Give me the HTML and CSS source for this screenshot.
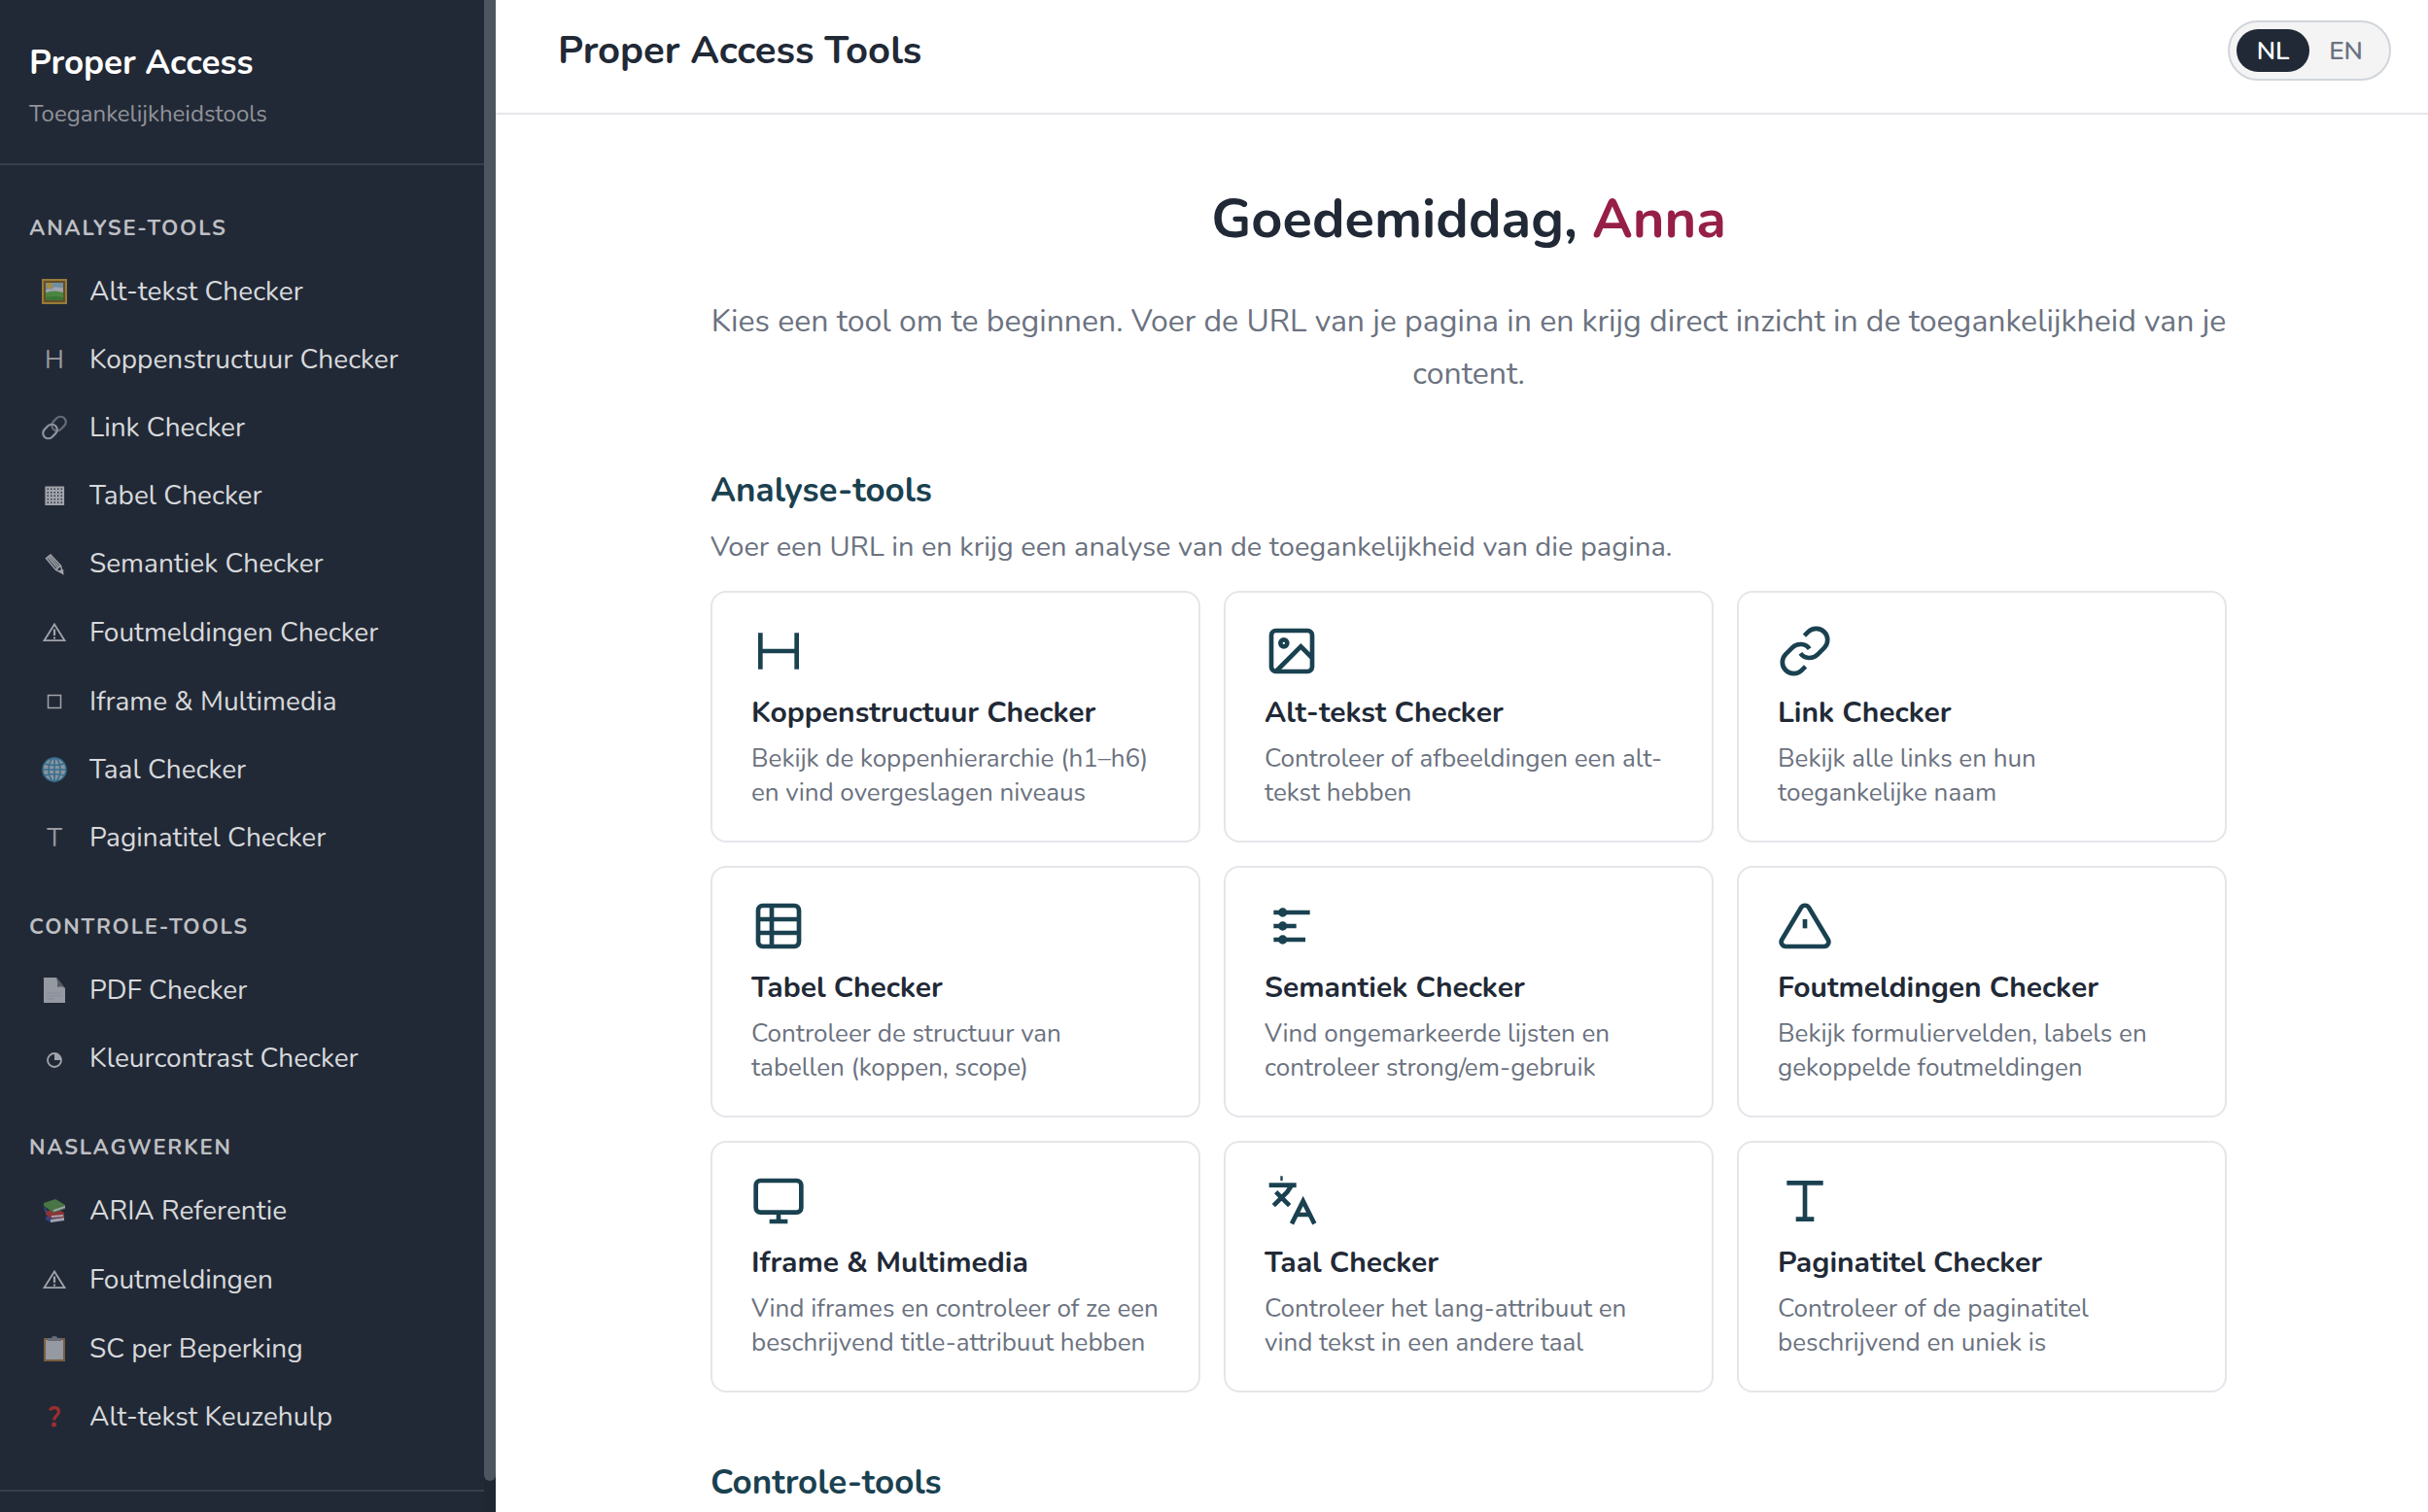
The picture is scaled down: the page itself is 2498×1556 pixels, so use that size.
FILE: index.html
```
<!DOCTYPE html>
<html lang="nl">
<head>
  <meta charset="UTF-8">
  <meta name="viewport" content="width=device-width, initial-scale=1">
  <title>Proper Access Tools</title>
  <link rel="stylesheet" href="styles.css">
</head>
<body>

<div class="layout">
  <aside class="sidebar">
    <div class="sidebar-content">
      <div class="sidebar-header">
        <a class="sidebar-logo" href="#">Proper Access</a>
        <p class="sidebar-tagline">Toegankelijkheidstools</p>
      </div>

      <nav class="sidebar-nav" aria-label="Tools">
        <section class="nav-section">
          <h2 class="nav-title">Analyse-tools</h2>
          <a class="nav-link" href="#alt-tekst">
            <span class="nav-icon"><svg viewBox="0 0 26 26" aria-hidden="true"><rect width="26" height="26" fill="#d6a83a"/><rect x="2" y="2" width="22" height="22" fill="#8a6420"/><rect x="4" y="4" width="18" height="18" fill="#9cc6dd"/><circle cx="8" cy="7" r="3" fill="#f0c244"/><path d="M4 12q3-3 6-1 3-4 7-2 4-1 5 1v4H4z" fill="#e3e6ee"/><path d="M4 14q9-3 18 0v8H4z" fill="#62b846"/><path d="M4 19q9-2 18 0v3H4z" fill="#479c38"/></svg></span>
            Alt-tekst Checker
          </a>
          <a class="nav-link" href="#koppen"><span class="nav-icon">H</span>Koppenstructuur Checker</a>
          <a class="nav-link" href="#link">
            <span class="nav-icon"><svg viewBox="0 0 26 26" fill="none" stroke-width="2.2" aria-hidden="true"><rect x="9.5" y="3.5" width="16" height="11" rx="5.5" transform="rotate(-45 17.5 9)" stroke="#8b8f9b"/><rect x="0.5" y="11.5" width="16" height="11" rx="5.5" transform="rotate(-45 8.5 17)" stroke="#c8ccd6"/></svg></span>
            Link Checker
          </a>
          <a class="nav-link" href="#tabel">
            <span class="nav-icon"><svg viewBox="0 0 26 26" fill="none" stroke="#e4e5e8" stroke-width="2.2" aria-hidden="true"><path d="M4.5 4v19M8 4v19M11.5 4v19M15 4v19M18.5 4v19M22 4v19M3.5 4.5H23M3.5 8H23M3.5 11.5H23M3.5 15H23M3.5 18.5H23M3.5 22H23"/></svg></span>
            Tabel Checker
          </a>
          <a class="nav-link" href="#semantiek">
            <span class="nav-icon"><svg viewBox="0 0 26 26" fill="none" stroke="#e4e5e8" stroke-width="1.5" aria-hidden="true"><path d="M4.5 7.5L9 4l10.5 11 2 8-7-3.5zM6 6l10.5 12M7.5 5L18 16.5M14.5 19.5l5-4.5"/><path d="M19 20.5l2.5-.5v3z" fill="#e4e5e8"/></svg></span>
            Semantiek Checker
          </a>
          <a class="nav-link nav-link-tall" href="#fout">
            <span class="nav-icon"><svg viewBox="0 0 26 26" fill="none" stroke="#e4e5e8" stroke-width="1.8" aria-hidden="true"><path d="M13 4.5l10.5 16.7h-21z"/><path d="M13 9.5V16M13 17.5v2" stroke-width="2.2"/></svg></span>
            Foutmeldingen Checker
          </a>
          <a class="nav-link" href="#iframe">
            <span class="nav-icon"><svg viewBox="0 0 26 26" fill="none" stroke="#e4e5e8" stroke-width="1.5" aria-hidden="true"><rect x="6.5" y="6.5" width="13" height="13"/></svg></span>
            Iframe &amp; Multimedia
          </a>
          <a class="nav-link" href="#taal">
            <span class="nav-icon"><svg viewBox="0 0 26 26" fill="none" stroke="#3f93bd" stroke-width="1.6" aria-hidden="true"><circle cx="13" cy="13" r="12" fill="#c3ccd6"/><ellipse cx="13" cy="13" rx="6" ry="12"/><path d="M13 1v24M1 13h24M3 7q10 3 20 0M3 19q10-3 20 0"/></svg></span>
            Taal Checker
          </a>
          <a class="nav-link" href="#paginatitel"><span class="nav-icon">T</span>Paginatitel Checker</a>
        </section>

        <section class="nav-section">
          <h2 class="nav-title">Controle-tools</h2>
          <a class="nav-link" href="#pdf">
            <span class="nav-icon"><svg viewBox="0 0 26 26" aria-hidden="true"><path d="M2 0h13l9 11v15H2z" fill="#d2d6dd"/><path d="M15 0l9 11q-4-3-8-1 1-5-1-10z" fill="#6e727b"/><path d="M5 16h15M5 19h15M5 22h8" stroke="#bcc1c9"/></svg></span>
            PDF Checker
          </a>
          <a class="nav-link" href="#contrast">
            <span class="nav-icon"><svg viewBox="0 0 26 26" aria-hidden="true"><circle cx="13" cy="15" r="7" fill="none" stroke="#e4e5e8" stroke-width="1.8"/><path d="M13 15V8a7 7 0 0 1 7 7z" fill="#e4e5e8"/></svg></span>
            Kleurcontrast Checker
          </a>
        </section>

        <section class="nav-section">
          <h2 class="nav-title">Naslagwerken</h2>
          <a class="nav-link" href="#aria">
            <span class="nav-icon"><svg viewBox="0 0 26 26" aria-hidden="true"><path d="M4 19l15-2 4 3v3L9 25l-5-3z" fill="#3c52a0"/><path d="M9 22l14-2v3L9 25z" fill="#e4e6ee"/><path d="M4 13l14-1 5 3v5l-13 1-6-4z" fill="#c63a38"/><path d="M10 18l12-1v2l-12 1z" fill="#e4e6ee"/><path d="M2 9l3 2v5l-2-2z" fill="#3c52a0"/><path d="M2 5l12-4 10 6v4l-12 4L2 8z" fill="#5c9f4c"/><path d="M12 12l12-4v2l-12 4z" fill="#e4e6ee"/></svg></span>
            ARIA Referentie
          </a>
          <a class="nav-link nav-link-tall" href="#foutmeldingen">
            <span class="nav-icon"><svg viewBox="0 0 26 26" fill="none" stroke="#e4e5e8" stroke-width="1.8" aria-hidden="true"><path d="M13 4.5l10.5 16.7h-21z"/><path d="M13 9.5V16M13 17.5v2" stroke-width="2.2"/></svg></span>
            Foutmeldingen
          </a>
          <a class="nav-link" href="#sc">
            <span class="nav-icon"><svg viewBox="0 0 26 26" aria-hidden="true"><rect x="2" y="2" width="22" height="24" fill="#a97a45"/><rect x="4" y="4" width="18" height="20" fill="#d3d6dc"/><path d="M6 2h4q0-2 3-2t3 2h4v3H6z" fill="#8d929c"/></svg></span>
            SC per Beperking
          </a>
          <a class="nav-link" href="#keuzehulp">
            <span class="nav-icon"><svg viewBox="0 0 26 26" fill="none" stroke="#e0322e" aria-hidden="true"><path d="M8.5 6.5C10 2.5 17.5 2.5 17.5 8c0 3.5-5 4-5 8.5" stroke-width="3.2"/><circle cx="12.5" cy="21" r="2.5" fill="#e0322e" stroke="none"/></svg></span>
            Alt-tekst Keuzehulp
          </a>
        </section>
      </nav>
      <div class="sidebar-footer"></div>
    </div>
    <div class="scroll-track"><div class="scroll-thumb"></div></div>
  </aside>

  <div class="page">
    <header class="topbar">
      <h1 class="topbar-title">Proper Access Tools</h1>
      <div class="lang-switch" role="group" aria-label="Taal">
        <button class="lang-button active" type="button" aria-pressed="true">NL</button>
        <button class="lang-button" type="button" aria-pressed="false">EN</button>
      </div>
    </header>

    <main class="main">
      <div class="container">
        <div class="hero">
          <h2 class="greeting">Goedemiddag, <span class="name">Anna</span></h2>
          <p class="intro">Kies een tool om te beginnen. Voer de URL van je pagina in en krijg direct inzicht in de toegankelijkheid van je content.</p>
        </div>

        <section class="tool-section">
          <h2 class="section-title">Analyse-tools</h2>
          <p class="section-text">Voer een URL in en krijg een analyse van de toegankelijkheid van die pagina.</p>
          <div class="card-grid">
            <a class="card" href="#koppen">
              <svg class="card-icon" viewBox="0 0 24 24" aria-hidden="true"><path d="M4 4v16M20 4v16M4 12h16"/></svg>
              <h3 class="card-title">Koppenstructuur Checker</h3>
              <p class="card-text">Bekijk de koppenhierarchie (h1–h6) en vind overgeslagen niveaus</p>
            </a>
            <a class="card" href="#alt-tekst">
              <svg class="card-icon" viewBox="0 0 24 24" aria-hidden="true"><rect x="3" y="3" width="18" height="18" rx="2"/><circle cx="8.5" cy="8.5" r="1.5"/><path d="M21 15l-5-5L5 21"/></svg>
              <h3 class="card-title">Alt-tekst Checker</h3>
              <p class="card-text">Controleer of afbeeldingen een alt-tekst hebben</p>
            </a>
            <a class="card" href="#link">
              <svg class="card-icon" viewBox="0 0 24 24" aria-hidden="true"><path d="M10 13a5 5 0 0 0 7.54.54l3-3a5 5 0 0 0-7.07-7.07l-1.72 1.71"/><path d="M14 11a5 5 0 0 0-7.54-.54l-3 3a5 5 0 0 0 7.07 7.07l1.71-1.71"/></svg>
              <h3 class="card-title">Link Checker</h3>
              <p class="card-text">Bekijk alle links en hun toegankelijke naam</p>
            </a>
            <a class="card" href="#tabel">
              <svg class="card-icon" viewBox="0 0 24 24" aria-hidden="true"><rect x="3" y="3" width="18" height="18" rx="2"/><path d="M3 9h18M3 15h18M9 3v18"/></svg>
              <h3 class="card-title">Tabel Checker</h3>
              <p class="card-text">Controleer de structuur van tabellen (koppen, scope)</p>
            </a>
            <a class="card" href="#semantiek">
              <svg class="card-icon" viewBox="0 0 24 24" aria-hidden="true"><path d="M4 6h16M4 12h10M4 18h14"/><circle cx="8" cy="6" r="1"/><circle cx="8" cy="12" r="1"/><circle cx="8" cy="18" r="1"/></svg>
              <h3 class="card-title">Semantiek Checker</h3>
              <p class="card-text">Vind ongemarkeerde lijsten en controleer strong/em-gebruik</p>
            </a>
            <a class="card" href="#fout">
              <svg class="card-icon" viewBox="0 0 24 24" aria-hidden="true"><path d="M10.29 3.86L1.82 18a2 2 0 0 0 1.71 3h16.94a2 2 0 0 0 1.71-3L13.71 3.86a2 2 0 0 0-3.42 0z"/><path d="M12 9v4"/></svg>
              <h3 class="card-title">Foutmeldingen Checker</h3>
              <p class="card-text">Bekijk formuliervelden, labels en gekoppelde foutmeldingen</p>
            </a>
            <a class="card" href="#iframe">
              <svg class="card-icon" viewBox="0 0 24 24" aria-hidden="true"><rect x="2" y="3" width="20" height="14" rx="2"/><path d="M8 21h8M12 17v4"/></svg>
              <h3 class="card-title">Iframe &amp; Multimedia</h3>
              <p class="card-text">Vind iframes en controleer of ze een beschrijvend title-attribuut hebben</p>
            </a>
            <a class="card" href="#taal">
              <svg class="card-icon" viewBox="0 0 24 24" aria-hidden="true"><path d="M5 8l6 6M4 14l6-6 2-3M2 5h12M7 2h1M22 22l-5-10-5 10M14 18h6"/></svg>
              <h3 class="card-title">Taal Checker</h3>
              <p class="card-text">Controleer het lang-attribuut en vind tekst in een andere taal</p>
            </a>
            <a class="card" href="#paginatitel">
              <svg class="card-icon" viewBox="0 0 24 24" aria-hidden="true"><path d="M4 4h16M12 4v16M8 20h8"/></svg>
              <h3 class="card-title">Paginatitel Checker</h3>
              <p class="card-text">Controleer of de paginatitel beschrijvend en uniek is</p>
            </a>
          </div>
        </section>

        <section class="tool-section">
          <h2 class="section-title">Controle-tools</h2>
        </section>
      </div>
    </main>
  </div>
</div>

</body>
</html>
```
FILE: styles.css
```
* {
  box-sizing: border-box;
  margin: 0;
  padding: 0;
}

body {
  font-family: Nunito, Lato, "Noto Sans", sans-serif;
  background: #fff;
  color: #212936;
}

a {
  color: inherit;
  text-decoration: none;
}

.layout {
  display: flex;
  height: 100vh;
  overflow: hidden;
}

/* Sidebar */
.sidebar {
  display: flex;
  flex: 0 0 510px;
  background: #222936;
  overflow: hidden;
}

.sidebar-content {
  flex: 1;
}

.sidebar-header {
  padding: 41px 30px 35px;
  border-bottom: 2px solid #383f4c;
}

.sidebar-logo {
  display: block;
  font-size: 35px;
  font-weight: 700;
  line-height: 48px;
  color: #fff;
}

.sidebar-tagline {
  margin-top: 12px;
  font-size: 24px;
  line-height: 32px;
  color: #90939a;
}

.sidebar-nav {
  display: flex;
  flex-direction: column;
  gap: 45px;
  padding: 53px 0 40px;
}

.nav-title {
  margin-bottom: 18px;
  padding: 0 30px;
  font-size: 22px;
  font-weight: 700;
  line-height: 24px;
  letter-spacing: 0.08em;
  text-transform: uppercase;
  color: #bdbfc3;
}

.nav-link {
  display: flex;
  align-items: center;
  gap: 20px;
  height: 70px;
  padding: 0 30px 0 40px;
  font-size: 28px;
  color: #d7d9dc;
}

.nav-link-tall {
  height: 72px;
}

.nav-icon {
  flex: 0 0 32px;
  font-size: 26px;
  text-align: center;
  opacity: 0.65;
}

.nav-icon svg {
  display: block;
  width: 26px;
  height: 26px;
  margin: 0 auto;
}

.sidebar-footer {
  height: 60px;
  border-top: 2px solid #383f4c;
}

.scroll-track {
  flex: 0 0 12px;
  height: 100vh;
  padding-bottom: 32px;
  background: #1f2733;
}

.scroll-thumb {
  height: 100%;
  border-radius: 0 0 6px 6px;
  background: #4d555f;
}

/* Page */
.page {
  flex: 1;
  min-width: 0;
}

.topbar {
  display: flex;
  align-items: center;
  justify-content: space-between;
  padding: 21px 38px 33px 64px;
  border-bottom: 2px solid #e5e6ea;
}

.topbar-title {
  font-size: 40px;
  font-weight: 700;
  line-height: 56px;
}

.lang-switch {
  display: flex;
  padding: 7px;
  border: 2px solid #d1d5db;
  border-radius: 31px;
  background: #f4f4f5;
}

.lang-button {
  height: 44px;
  width: 75px;
  border: none;
  border-radius: 22px;
  background: transparent;
  font-family: inherit;
  font-size: 26px;
  font-weight: 600;
  color: #6b7280;
  cursor: pointer;
}

.lang-button.active {
  background: #212936;
  color: #fff;
}

.main {
  padding: 72px 50px 0 64px;
}

.container {
  max-width: 1560px;
  margin: 0 auto;
}

.hero {
  margin-bottom: 66px;
  text-align: center;
}

.greeting {
  margin-bottom: 42px;
  font-size: 56px;
  font-weight: 700;
  line-height: 72px;
}

.name {
  color: #961f48;
}

.intro {
  font-size: 32px;
  line-height: 54px;
  color: #6b7280;
}

.tool-section {
  margin-bottom: 66px;
}

.section-title {
  margin-bottom: 10px;
  font-size: 35px;
  font-weight: 700;
  line-height: 54px;
  color: #1a4150;
}

.section-text {
  margin-bottom: 24px;
  font-size: 29px;
  line-height: 42px;
  color: #6b7280;
}

.card-grid {
  display: grid;
  grid-template-columns: repeat(3, 1fr);
  gap: 24px;
}

.card {
  padding: 32px 40px;
  border: 2px solid #e5e6ea;
  border-radius: 16px;
  background: #fff;
}

.card-icon {
  display: block;
  width: 56px;
  height: 56px;
  margin-bottom: 15px;
  fill: none;
  stroke: #1a4150;
  stroke-width: 2;
}

.card-title {
  margin-bottom: 8px;
  font-size: 30px;
  font-weight: 700;
  line-height: 42px;
}

.card-text {
  font-size: 26px;
  line-height: 35px;
  color: #6b7280;
}
```
